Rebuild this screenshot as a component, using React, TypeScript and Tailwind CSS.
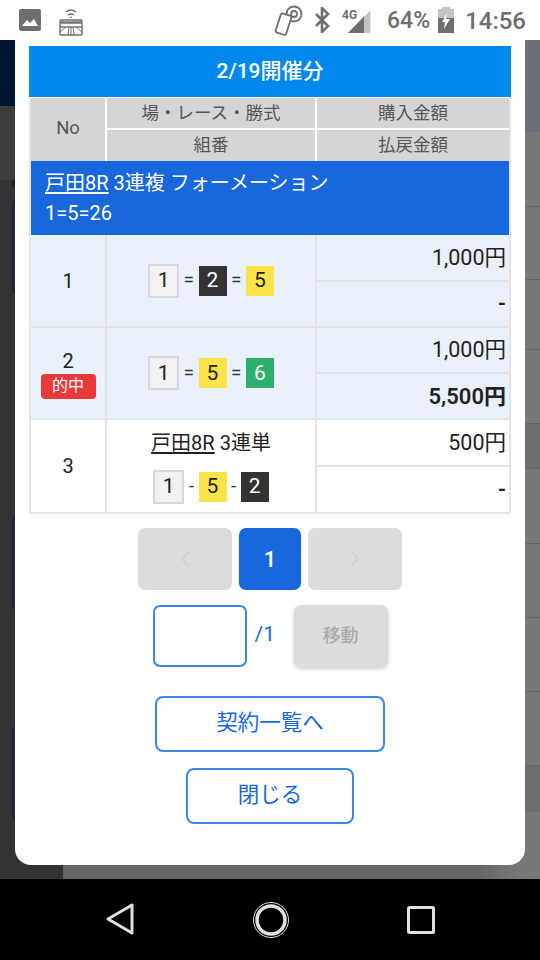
import type { ReactNode } from "react";
import { ChevronLeft, ChevronRight } from "lucide-react";

const font = "font-['Roboto','Noto_Sans_CJK_JP',sans-serif]";

const white = "h-[34px] w-[31px] border-2 border-[#d8d8d8] bg-[#f2f2f2] text-[#222]";
const black = "h-[30px] w-[28px] bg-[#333] text-white";
const yellow = "h-[30px] w-[28px] bg-[#fce34a] text-[#222]";
const green = "h-[30px] w-[28px] bg-[#2db06c] text-white";

function Ball({ n, c }: { n: string; c: string }) {
  return <span className={`flex items-center justify-center text-[21px] leading-none ${c}`}>{n}</span>;
}

function Combo({ sep, balls }: { sep: string; balls: [string, string][] }) {
  return (
    <div className="flex items-center justify-center gap-[4.5px] text-[19px] text-[#333]">
      <Ball n={balls[0][0]} c={balls[0][1]} />
      <span>{sep}</span>
      <Ball n={balls[1][0]} c={balls[1][1]} />
      <span>{sep}</span>
      <Ball n={balls[2][0]} c={balls[2][1]} />
    </div>
  );
}

function Row({ no, bg, h, hit, combo, buy, pay, payBig }: { no: string; bg: string; h: string; hit?: boolean; combo: ReactNode; buy: string; pay: string; payBig?: boolean }) {
  return (
    <div className={`grid grid-cols-[74px_208px_1fr] gap-x-[2px] bg-[#e4e4e4] pb-[2px] ${h}`}>
      <div className={`flex flex-col items-center justify-center text-[20px] leading-[26px] text-[#222] ${bg}`}>
        {no}
        {hit && <span className="flex h-[25px] w-[55px] items-center justify-center rounded-[4px] bg-[#e83a3a] text-[16px] text-white">的中</span>}
      </div>
      <div className={`flex flex-col items-center justify-center ${bg}`}>{combo}</div>
      <div className="grid grid-rows-2 gap-y-[2px] text-[21.5px] text-[#222]">
        <div className={`flex items-center justify-end pr-[3px] pt-[1px] ${bg}`}>{buy}</div>
        <div className={`flex items-center justify-end pr-[3px] pt-[1px] font-semibold ${payBig ? "text-[22px]" : ""} ${bg}`}>{pay}</div>
      </div>
    </div>
  );
}

function SideMark({ mt }: { mt: string }) {
  return <div className={`ml-[12px] h-[94px] w-[8px] rounded-l-[5px] border-2 border-[#14233f] ${mt}`} />;
}

export default function App() {
  return (
    <div className={`relative flex h-[960px] w-[540px] flex-col overflow-hidden ${font}`}>
      {/* ステータスバー */}
      <div className="flex h-[40px] items-center justify-between bg-white pl-[19px] pr-[14px] text-[#6e6e6e]">
        <div className="flex items-center gap-[18px]">
          <svg width="22" height="22" viewBox="0 0 22 22"><rect width="22" height="22" rx="2" fill="#6e6e6e" /><path d="M3 17l5-6 3 3 4-4 4 7z" fill="#fff" /></svg>
          <svg width="24" height="28" viewBox="0 0 24 28" fill="none" stroke="#6e6e6e" strokeWidth="1.4" className="mt-[4px]">
            <path d="M7 4q5-4 10 0M9 7q3-2 6 0M11 9.5q1-.7 2 0" />
            <rect x="1" y="12" width="22" height="15" rx="1" />
            <path d="M1 14.5h22" strokeWidth="2.4" />
            <path d="M1 19h22" />
            <path d="M1 24l6-5M23 24l-6-5M12 19v8M9 27l1-8M15 27l-1-8" strokeWidth="1" />
          </svg>
        </div>
        <div className="flex items-center">
          <svg width="30" height="32" viewBox="0 0 30 32" fill="none" stroke="#6e6e6e" strokeWidth="1.8" className="mr-[10px]">
            <circle cx="20" cy="10" r="3" />
            <circle cx="20" cy="10" r="7.5" />
            <rect x="4" y="10" width="11" height="20" rx="2" transform="rotate(18 9 20)" fill="#fff" />
          </svg>
          <svg width="16" height="26" viewBox="0 0 16 26" fill="none" stroke="#6e6e6e" strokeWidth="2.6" className="mr-[12px]"><path d="M2 7l12 12-6 6V1l6 6L2 19" /></svg>
          <div className="relative mr-[15px] h-[26px] w-[30px]">
            <svg width="30" height="26" viewBox="0 0 30 26"><path d="M6 26L28.5 3V26z" fill="#c4c4c4" /><path d="M6 26L22 9.6V26z" fill="#6e6e6e" /></svg>
            <span className="absolute left-0 top-[1px] text-[12px] font-bold leading-[14px]">4G</span>
          </div>
          <span className="mr-[8px] text-[23px] font-medium leading-none">64%</span>
          <svg width="16" height="26" viewBox="0 0 16 26" className="mr-[11px]"><rect x="4" y="0" width="8" height="3" fill="#c4c4c4" /><rect y="2" width="16" height="24" fill="#c4c4c4" /><rect y="11" width="16" height="15" fill="#6e6e6e" /><path d="M9 6l-5 9h3l-1 7 6-10H8z" fill="#fff" /></svg>
          <span className="pt-[2px] text-[24px] font-medium leading-none">14:56</span>
        </div>
      </div>

      {/* 背景 */}
      <div className="flex h-[839px]">
        <div className="flex w-[63px] flex-col bg-[#333]">
          <div className="h-[66px] shrink-0 bg-[#001530]" />
          <div className="h-[74px] shrink-0 bg-[#3d3d3d]" />
          <div className="ml-[12px] h-[7px] w-[8px] shrink-0 bg-[#14233f]" />
          <SideMark mt="mt-[13px]" />
          <SideMark mt="mt-[222px]" />
          <SideMark mt="mt-[116px]" />
        </div>
        <div className="flex-1 bg-linear-to-r from-[#666] from-90% to-[#7a7a7a]" />
        <div className="flex w-[15px] flex-col bg-[#787878]">
          <div className="h-[92px] shrink-0 bg-[#6e7078]" />
          <div className="h-[75px] shrink-0 border-b border-[#666]" />
          <div className="h-[73px] shrink-0 border-b border-[#666]" />
          <div className="h-[70px] shrink-0 border-b border-[#666]" />
          <div className="h-[74px] shrink-0 border-b border-[#666]" />
          <div className="h-[45px] shrink-0 border-b border-[#666] bg-[#6e6e6e]" />
          <div className="h-[75px] shrink-0 border-b border-[#666]" />
          <div className="h-[74px] shrink-0 border-b border-[#666]" />
          <div className="h-[74px] shrink-0 border-b border-[#666]" />
          <div className="h-[74px] shrink-0 border-b border-[#666]" />
          <div className="h-[46px] shrink-0 bg-[#6e6e6e]" />
        </div>
      </div>

      {/* モーダル */}
      <div className="absolute left-[15px] top-[40px] flex h-[825px] w-[510px] flex-col rounded-b-[16px] bg-white px-[14px] pt-[6px]">
        <div className="flex h-[51px] w-[482px] items-center justify-center bg-[#0088ec] text-[21px] font-medium text-white">2/19開催分</div>

        <div className="w-[482px] border-x-2 border-[#e4e4e4]">
          <div className="grid h-[64px] grid-cols-[74px_208px_1fr] gap-[2px] bg-white pt-[1px] text-[17.5px] text-[#555]">
            <div className="row-span-2 flex items-center justify-center bg-[#d5d5d5] pb-[1px] text-[18.5px]">No</div>
            <div className="flex items-center justify-center bg-[#d5d5d5]">場・レース・勝式</div>
            <div className="flex items-center justify-center bg-[#d5d5d5]">購入金額</div>
            <div className="flex items-center justify-center bg-[#d5d5d5] pb-[1px]">組番</div>
            <div className="flex items-center justify-center bg-[#d5d5d5] pb-[1px]">払戻金額</div>
          </div>
          <div className="flex h-[74px] flex-col justify-center bg-[#1868dc] pl-[14px] text-[20px] leading-[30px] text-white">
            <div><span className="underline underline-offset-2">戸田8R</span> 3連複 フォーメーション</div>
            <div>1=5=26</div>
          </div>
          <Row no="1" h="h-[93px]" bg="bg-[#e9f1fd]" buy="1,000円" pay="-" combo={<Combo sep="=" balls={[["1", white], ["2", black], ["5", yellow]]} />} />
          <Row no="2" h="h-[92px]" hit bg="bg-[#e9f1fd]" buy="1,000円" pay="5,500円" payBig combo={<Combo sep="=" balls={[["1", white], ["5", yellow], ["6", green]]} />} />
          <Row
            no="3"
            h="h-[94px]"
            bg="bg-white"
            buy="500円"
            pay="-"
            combo={
              <div className="flex flex-col items-center gap-[13px]">
                <div className="text-[20px] leading-[28px] text-[#222]"><span className="underline underline-offset-2">戸田8R</span> 3連単</div>
                <Combo sep="-" balls={[["1", white], ["5", yellow], ["2", black]]} />
              </div>
            }
          />
        </div>

        <div className="mt-[14px] flex justify-center gap-[7px]">
          <div className="flex h-[62px] w-[94px] items-center justify-center rounded-[7px] bg-[#dcdcdc] text-[#d0d0d0]"><ChevronLeft size={26} strokeWidth={1.5} /></div>
          <div className="flex h-[62px] w-[62px] items-center justify-center rounded-[7px] bg-[#1868dc] text-[22px] font-medium text-white">1</div>
          <div className="flex h-[62px] w-[94px] items-center justify-center rounded-[7px] bg-[#dcdcdc] text-[#d0d0d0]"><ChevronRight size={26} strokeWidth={1.5} /></div>
        </div>

        <div className="mt-[15px] flex items-center justify-center">
          <div className="h-[62px] w-[94px] rounded-[7px] border-2 border-[#3a86e8]" />
          <span className="ml-[8px] w-[39px] pb-[2px] text-[21px] text-[#1868dc]">/1</span>
          <div className="flex h-[62px] w-[94px] items-center justify-center rounded-[7px] bg-[#dcdcdc] pb-[1px] text-[18px] font-medium text-[#aaa] shadow-[0_2px_4px_rgba(0,0,0,0.2)]">移動</div>
        </div>

        <div className="mt-[29px] flex flex-col items-center gap-[16px]">
          <div className="flex h-[56px] w-[230px] items-center justify-center rounded-[8px] border-2 border-[#3a86e8] pb-[1px] text-[21.5px] text-[#1868dc]">契約一覧へ</div>
          <div className="flex h-[56px] w-[168px] items-center justify-center rounded-[8px] border-2 border-[#3a86e8] pb-[1px] text-[21.5px] text-[#1868dc]">閉じる</div>
        </div>
      </div>

      {/* ナビゲーションバー */}
      <div className="flex h-[81px] items-start justify-center gap-[117px] bg-black pt-[22px]">
        <svg width="30" height="34" viewBox="0 0 30 34" fill="none" stroke="#e0e0e0" strokeWidth="3" strokeLinejoin="round" className="mt-[1px]"><path d="M27 3v28L3 17z" /></svg>
        <svg width="38" height="38" viewBox="0 0 38 38" fill="none" stroke="#e0e0e0"><circle cx="19" cy="19" r="17.5" strokeWidth="1" /><circle cx="19" cy="19" r="14" strokeWidth="3.5" /></svg>
        <svg width="28" height="28" viewBox="0 0 28 28" fill="none" stroke="#e0e0e0" strokeWidth="3" className="mt-[5px]"><rect x="1.5" y="1.5" width="25" height="25" rx="1" /></svg>
      </div>
    </div>
  );
}
